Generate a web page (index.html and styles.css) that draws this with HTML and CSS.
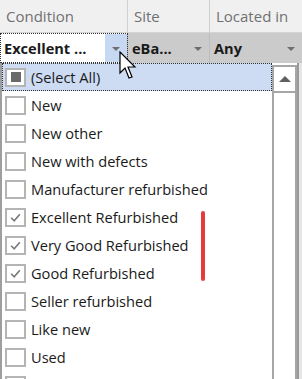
FILE: index.html
```html
<!DOCTYPE html>
<html>
<head>
<meta charset="utf-8">
<link rel="stylesheet" href="styles.css">
</head>
<body>
<div class="grid-head">
  <div class="hcell">Condition</div>
  <div class="hcell">Site</div>
  <div class="hcell">Located in</div>
</div>
<div class="grid-filter">
  <div class="fcell active"><span class="ftext">Excellent ...</span><span class="fbtn"><span class="tri"></span></span></div>
  <div class="fcell"><span class="ftext">eBa...</span><span class="fbtn"><span class="tri"></span></span></div>
  <div class="fcell"><span class="ftext">Any</span><span class="fbtn"><span class="tri"></span></span></div>
</div>
<div class="popup">
  <div class="list">
    <div class="item focused"><span class="cb"><span class="ind"></span></span>(Select All)</div>
    <div class="item"><span class="cb"></span>New</div>
    <div class="item"><span class="cb"></span>New other</div>
    <div class="item"><span class="cb"></span>New with defects</div>
    <div class="item"><span class="cb"></span>Manufacturer refurbished</div>
    <div class="item"><span class="cb"><svg viewBox="0 0 12 12" class="chk"><path d="M2 6.2 L4.8 9 L10 3" /></svg></span>Excellent Refurbished</div>
    <div class="item"><span class="cb"><svg viewBox="0 0 12 12" class="chk"><path d="M2 6.2 L4.8 9 L10 3" /></svg></span>Very Good Refurbished</div>
    <div class="item"><span class="cb"><svg viewBox="0 0 12 12" class="chk"><path d="M2 6.2 L4.8 9 L10 3" /></svg></span>Good Refurbished</div>
    <div class="item"><span class="cb"></span>Seller refurbished</div>
    <div class="item"><span class="cb"></span>Like new</div>
    <div class="item"><span class="cb"></span>Used</div>
    <div class="item"><span class="cb"></span></div>
  </div>
  <div class="scroll">
    <div class="sbtn"><span class="uptri"></span></div>
  </div>
  <div class="behind"></div>
  <div class="redbar"></div>
</div>
<svg class="cursor" width="20" height="30" viewBox="0 0 20 30">
  <path d="M1 1 L1 22 L6 17 L10 27 L13 26 L9 16 L16 16 Z" fill="#fff" stroke="#000" stroke-width="1.2" stroke-linejoin="miter"/>
</svg>
</body>
</html>
```
FILE: styles.css
```css
html, body {
  margin: 0;
  padding: 0;
  background: #fff;
  width: 302px;
  height: 379px;
  overflow: hidden;
  position: relative;
  font-family: "Open Sans", "Noto Sans", sans-serif;
}
.grid-head {
  display: grid;
  grid-template-columns: 128px 82px 1fr;
  height: 33px;
  background: #f0f0f0;
  box-sizing: border-box;
  border-bottom: 1px solid #d4d4d4;
}
.hcell {
  border-right: 1px solid #d0d0d0;
  color: #707070;
  font-size: 15px;
  line-height: 32px;
  padding-left: 6px;
  white-space: nowrap;
  overflow: hidden;
}
.hcell:last-child { border-right: none; }
.grid-filter {
  display: grid;
  grid-template-columns: 128px 82px 1fr;
  height: 30px;
  background: #cbcbcb;
}
.fcell {
  display: flex;
  align-items: center;
  font-weight: bold;
  font-size: 14.6px;
  color: #1a1a1a;
  border-right: 1px solid #bdbdbd;
  box-sizing: border-box;
  white-space: nowrap;
  overflow: hidden;
}
.fcell:last-child { border-right: none; }
.ftext {
  flex: 1;
  padding-left: 4px;
  overflow: hidden;
}
.fbtn {
  width: 22px;
  align-self: stretch;
  display: flex;
  align-items: center;
  justify-content: center;
}
.tri {
  width: 0; height: 0;
  border-left: 4px solid transparent;
  border-right: 4px solid transparent;
  border-top: 4px solid #6e6e6e;
  margin-top: 2px;
}
.fcell.active {
  background: #fff;
  outline: 1px dotted #333;
  outline-offset: -1px;
}
.fcell.active .fbtn {
  background: #c6d8f2;
  margin: 1px 0;
}
.popup {
  display: flex;
  height: 316px;
  position: relative;
}
.list {
  width: 272px;
  border-left: 2px solid #9e9e9e;
  box-sizing: border-box;
  background: #fff;
  overflow: hidden;
}
.item {
  height: 28px;
  display: flex;
  align-items: center;
  font-size: 14.6px;
  color: #1a1a1a;
  white-space: nowrap;
  flex: none;
}
.item.focused {
  background: #cddcf3;
  outline: 1px dotted #333;
  outline-offset: -1px;
}
.cb {
  width: 17px;
  height: 15px;
  border: 2px solid #b4b4b4;
  background: #fff;
  margin-left: 3px;
  margin-right: 5px;
  display: flex;
  align-items: center;
  justify-content: center;
  flex: none;
}
.ind {
  width: 10px;
  height: 10px;
  background: #6a6a6a;
}
.chk {
  width: 13px;
  height: 13px;
  fill: none;
  stroke: #7a7a7a;
  stroke-width: 1.5;
}
.scroll {
  width: 25px;
  margin-top: 2px;
  border: 2px solid #a6a6a6;
  border-bottom: none;
  box-sizing: border-box;
  background: #fff;
}
.sbtn {
  height: 24px;
  border-bottom: 2px solid #a6a6a6;
  display: flex;
  align-items: center;
  justify-content: center;
}
.uptri {
  width: 0; height: 0;
  border-left: 6px solid transparent;
  border-right: 6px solid transparent;
  border-bottom: 6px solid #606060;
}
.behind {
  flex: 1;
  background: #e6e6e6;
  border-left: 2px solid #9a9a9a;
}
.redbar {
  position: absolute;
  left: 201px;
  top: 148px;
  width: 4px;
  height: 70px;
  border-radius: 2px;
  background: #e8393f;
}
.cursor {
  position: absolute;
  left: 119px;
  top: 51px;
}
```
